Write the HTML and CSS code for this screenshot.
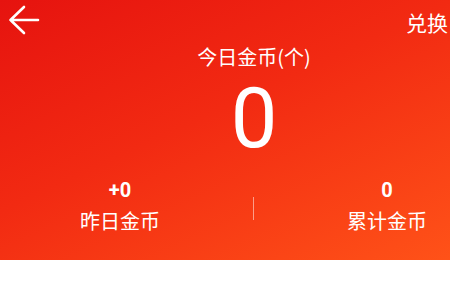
FILE: index.html
```html
<!DOCTYPE html>
<html lang="zh">
<head>
<meta charset="utf-8">
<link rel="stylesheet" href="styles.css">
</head>
<body>
<div class="hero">
  <div class="topbar">
    <svg class="back" width="44" height="44" viewBox="0 0 44 44">
      <path d="M10.5 20 H38 M24 7 L10.5 20 L24 33" fill="none" stroke="#fff" stroke-width="2.6" stroke-linecap="round" stroke-linejoin="round"/>
    </svg>
    <span class="exchange">兑换</span>
  </div>
  <div class="content">
    <div class="title">今日金币(个)</div>
    <div class="big">0</div>
  </div>
  <div class="stats">
    <div class="stat">
      <div class="num">+0</div>
      <div class="label">昨日金币</div>
    </div>
    <div class="divider"></div>
    <div class="stat">
      <div class="num">0</div>
      <div class="label">累计金币</div>
    </div>
  </div>
</div>
</body>
</html>
```
FILE: styles.css
```css
html, body {
  margin: 0;
  padding: 0;
  background: #fff;
  overflow: hidden;
}
body {
  width: 450px;
  height: 300px;
  font-family: "Noto Sans CJK SC", "Noto Sans", sans-serif;
  color: #fff;
}
.hero {
  height: 260px;
  background: linear-gradient(155deg, #e6130f 0%, #f22a12 45%, #ff5218 100%);
  overflow: hidden;
}
.topbar {
  height: 44px;
  display: flex;
  align-items: center;
  justify-content: space-between;
  padding-right: 2px;
}
.back {
  display: block;
}
.exchange {
  font-size: 21px;
  line-height: 26px;
}
.content {
  padding-left: 58px;
  text-align: center;
}
.title {
  font-size: 20px;
  line-height: 26px;
}
.big {
  margin-top: 4px;
  font-family: Roboto, "Liberation Sans", sans-serif;
  font-weight: 400;
  font-size: 83px;
  line-height: 90px;
}
.stats {
  display: flex;
  align-items: center;
  gap: 53px;
  padding-left: 40px;
  margin-top: 14px;
  width: 600px;
}
.stat {
  width: 160px;
  flex: none;
  text-align: center;
}
.num {
  font-family: Roboto, "Liberation Sans", sans-serif;
  font-weight: 700;
  font-size: 20px;
  line-height: 24px;
}
.label {
  margin-top: 6px;
  font-size: 20px;
  line-height: 26px;
}
.divider {
  flex: none;
  width: 1px;
  height: 23px;
  margin-top: 4px;
  background: rgba(255, 255, 255, 0.5);
}
```
